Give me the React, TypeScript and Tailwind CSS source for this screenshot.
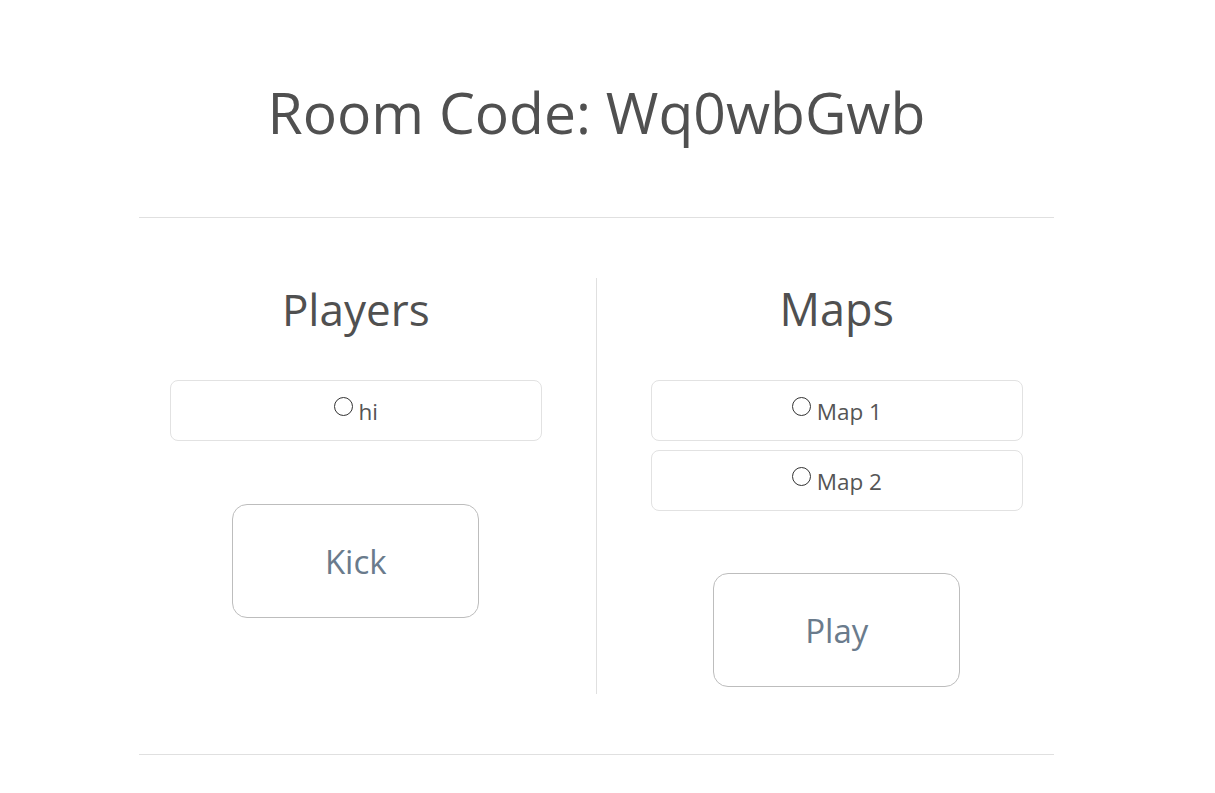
import { useState } from 'react';

const players = ['hi'];
const maps = ['Map 1', 'Map 2'];

type OptionListProps = {
  name: string;
  items: string[];
  selected: string | null;
  onSelect: (item: string) => void;
};

const OptionList = ({ name, items, selected, onSelect }: OptionListProps) => (
  <div className="flex w-[372px] flex-col gap-[9px]">
    {items.map((item) => (
      <label
        key={item}
        className="flex h-[61px] cursor-pointer items-center justify-center rounded-[8px] border border-[#e2e2e2] text-[22.5px] text-[#555]"
      >
        <input
          type="radio"
          name={name}
          checked={selected === item}
          onChange={() => onSelect(item)}
          className="mr-[6px] mb-[8px] h-[19px] w-[19px] appearance-none rounded-full border border-[#333] checked:border-[6px]"
        />
        <span className="pt-[3px]">{item}</span>
      </label>
    ))}
  </div>
);

const ActionButton = ({ children, className }: { children: string; className: string }) => (
  <button
    className={`h-[114px] w-[247px] rounded-[15px] border border-[#bdbdbd] bg-white text-[33px] text-[#6a7b8c] ${className}`}
  >
    <span className="relative top-[1px]">{children}</span>
  </button>
);

export default function App() {
  const [player, setPlayer] = useState<string | null>(null);
  const [map, setMap] = useState<string | null>(null);

  return (
    <div className="min-h-screen bg-white pr-[22px] font-['Segoe_UI','Open_Sans',sans-serif] text-[#505050]">
      <div className="mx-auto flex w-[961px] flex-col items-center">
        <h1 className="pt-[72px] pb-[65px] text-[57px] leading-[80px]">
          Room Code: Wq0wbGwb
        </h1>
        <hr className="w-[915px] border-t border-[#e0e0e0]" />

        <div className="mt-[60px] flex w-full">
          <div className="flex w-1/2 flex-col items-center border-r border-[#e0e0e0] pb-[76px]">
            <h2 className="mb-[40px] text-[44px] leading-[62px]">Players</h2>
            <OptionList
              name="player"
              items={players}
              selected={player}
              onSelect={setPlayer}
            />
            <ActionButton className="mt-[63px]">Kick</ActionButton>
          </div>
          <div className="flex w-1/2 flex-col items-center">
            <h2 className="mb-[40px] text-[45px] leading-[62px]">Maps</h2>
            <OptionList
              name="map"
              items={maps}
              selected={map}
              onSelect={setMap}
            />
            <ActionButton className="mt-[62px]">Play</ActionButton>
          </div>
        </div>

        <hr className="mt-[60px] w-[915px] border-t border-[#e0e0e0]" />
      </div>
    </div>
  );
}
